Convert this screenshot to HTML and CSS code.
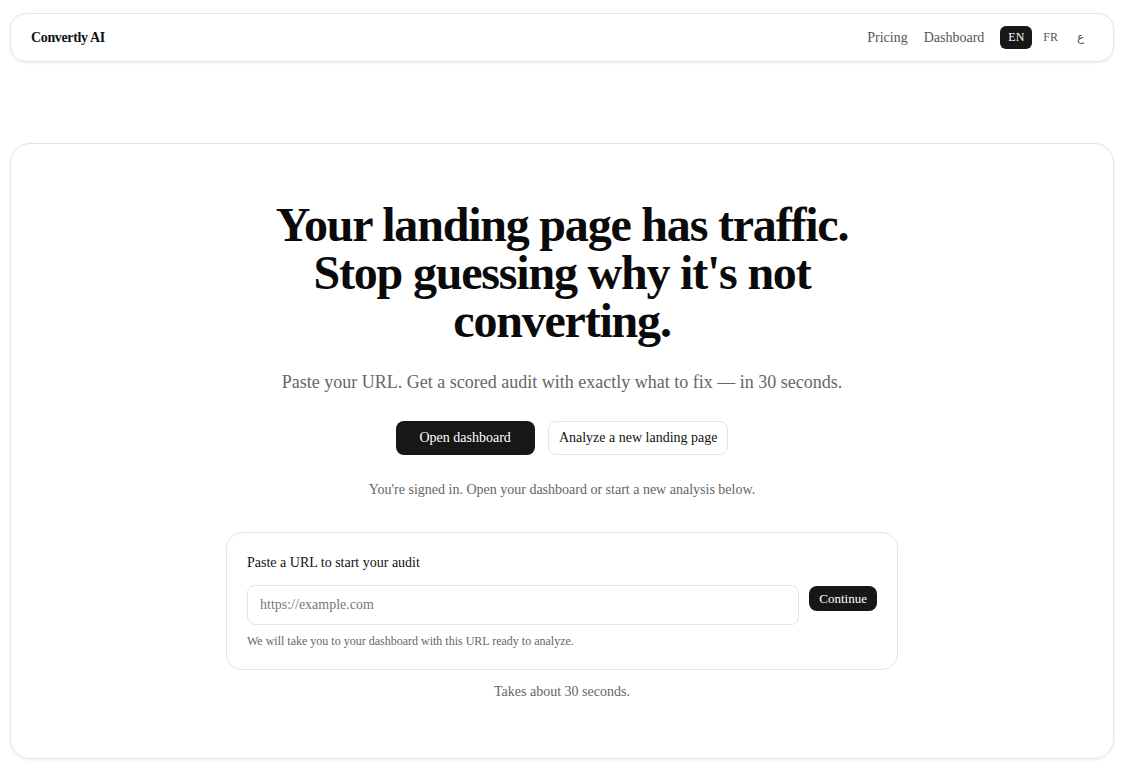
FILE: index.html
```html
<!DOCTYPE html>
<html lang="en">
<head>
  <meta charset="UTF-8" />
  <meta name="viewport" content="width=device-width, initial-scale=1.0" />
  <title>Convertly AI</title>
  <link rel="stylesheet" href="styles.css">
</head>
<body>
  <header class="topbar">
    <a class="logo" href="#">Convertly AI</a>
    <nav class="nav">
      <a href="#">Pricing</a>
      <a href="#">Dashboard</a>
      <div class="langs">
        <button class="lang active">EN</button>
        <button class="lang">FR</button>
        <button class="lang">ع</button>
      </div>
    </nav>
  </header>

  <main class="hero">
    <h1>Your landing page has traffic. Stop guessing why it's not converting.</h1>
    <p class="sub">Paste your URL. Get a scored audit with exactly what to fix — in 30 seconds.</p>

    <div class="actions">
      <button class="btn btn-dark">Open dashboard</button>
      <button class="btn btn-light">Analyze a new landing page</button>
    </div>

    <p class="signed">You're signed in. Open your dashboard or start a new analysis below.</p>

    <form class="audit-card" onsubmit="return false">
      <label for="url">Paste a URL to start your audit</label>
      <div class="audit-row">
        <input type="text" id="url" placeholder="https://example.com" />
        <button class="continue">Continue</button>
      </div>
      <p class="note">We will take you to your dashboard with this URL ready to analyze.</p>
    </form>

    <p class="takes">Takes about 30 seconds.</p>
  </main>
</body>
</html>
```

FILE: styles.css
```css
body {
  font-family: 'Liberation Serif', 'Times New Roman', serif;
  margin: 0;
  padding: 13px 14px 8px 10px;
  background: #fff;
  color: #111;
}

a {
  color: inherit;
  text-decoration: none;
}

button {
  font-family: inherit;
  cursor: pointer;
}

.topbar {
  display: flex;
  align-items: center;
  justify-content: space-between;
  height: 47px;
  padding: 0 21px 0 20px;
  border: 1px solid #e5e5e5;
  border-radius: 16px;
  box-shadow: 0 1px 3px rgba(0,0,0,0.08);
}

.logo {
  font-size: 14px;
  font-weight: 700;
  letter-spacing: -0.025em;
}

.nav {
  display: flex;
  align-items: center;
  gap: 16px;
  font-size: 14px;
  color: #555;
}

.langs {
  display: flex;
  gap: 3px;
}

.lang {
  font-size: 12px;
  line-height: 15px;
  padding: 4px 8px;
  border: none;
  border-radius: 6px;
  background: none;
  color: #555;
}

.lang.active {
  background: #171717;
  color: #fff;
}

.hero {
  margin-top: 81px;
  padding: 57px 24px 56px;
  border: 1px solid #e5e5e5;
  border-radius: 20px;
  box-shadow: 0 1px 3px rgba(0,0,0,0.08);
  text-align: center;
  display: flex;
  flex-direction: column;
  align-items: center;
}

.hero h1 {
  max-width: 640px;
  margin: 0;
  font-size: 48px;
  line-height: 48px;
  font-weight: 700;
  letter-spacing: -0.025em;
  color: #0a0a0a;
}

.sub {
  margin: 23px 0 0;
  font-size: 18px;
  line-height: 28px;
  color: #666;
}

.actions {
  display: flex;
  gap: 13px;
  margin-top: 25px;
}

.btn {
  font-size: 14px;
  line-height: 20px;
  padding: 6px 23px;
  border-radius: 8px;
  border: 1px solid transparent;
}

.btn-dark {
  background: #171717;
  color: #fff;
}

.btn-light {
  background: #fff;
  color: #111;
  border-color: #e5e5e5;
  padding: 6px 10px;
}

.signed {
  margin: 25px 0 0;
  font-size: 14px;
  line-height: 20px;
  color: #666;
}

.audit-card {
  width: 630px;
  margin-top: 32px;
  padding: 20px 20px 20px;
  border: 1px solid #e5e5e5;
  border-radius: 16px;
  text-align: left;
}

.audit-card label {
  display: block;
  font-size: 14px;
  line-height: 20px;
  color: #111;
}

.audit-row {
  display: flex;
  align-items: flex-start;
  gap: 10px;
  margin-top: 12px;
}

.audit-row input {
  flex: 1;
  height: 40px;
  box-sizing: border-box;
  padding: 0 12px;
  font-family: inherit;
  font-size: 14px;
  border: 1px solid #e5e5e5;
  border-radius: 8px;
  outline: none;
}

.audit-row input::placeholder {
  color: #777;
}

.continue {
  height: 25px;
  margin-top: 1px;
  padding: 0 10px;
  font-size: 13px;
  border: none;
  border-radius: 8px;
  background: #171717;
  color: #fff;
}

.note {
  margin: 8px 0 0;
  font-size: 12px;
  line-height: 16px;
  color: #666;
}

.takes {
  margin: 12px 0 0;
  font-size: 14px;
  line-height: 20px;
  color: #666;
}
```
